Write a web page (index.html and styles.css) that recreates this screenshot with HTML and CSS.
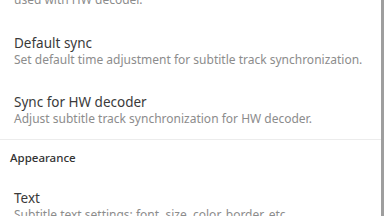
FILE: index.html
```html
<!DOCTYPE html>
<html>
<head>
    <title>Subtitle settings</title>
    <link rel="stylesheet" href="styles.css">
</head>
<body>
    <div class="screen">
        <div class="list">
            <div class="item cut">
                <div class="summary">used with HW decoder.</div>
            </div>
            <div class="item">
                <div class="title">Default sync</div>
                <div class="summary">Set default time adjustment for subtitle track synchronization.</div>
            </div>
            <div class="item">
                <div class="title">Sync for HW decoder</div>
                <div class="summary">Adjust subtitle track synchronization for HW decoder.</div>
            </div>
            <div class="divider"></div>
            <div class="category">Appearance</div>
            <div class="item">
                <div class="title">Text</div>
                <div class="summary">Subtitle text settings: font, size, color, border, etc.</div>
            </div>
        </div>
        <div class="scrollbar"></div>
    </div>
</body>
</html>
```

FILE: styles.css
```css
body {
    margin: 0;
    font-family: "Noto Sans", sans-serif;
    background-color: #fff;
}

.screen {
    display: flex;
    width: 384px;
    height: 216px;
    overflow: hidden;
}

.list {
    flex: 1;
}

.item {
    padding: 14px 14px 12px;
}

.item.cut {
    margin-top: -8px;
    padding-top: 0;
    padding-bottom: 13px;
}

.title {
    font-size: 13.5px;
    line-height: 17px;
    color: #3a3a3a;
}

.summary {
    font-size: 12px;
    line-height: 16px;
    color: #8c8c8c;
}

.divider {
    height: 1px;
    background-color: #ececec;
}

.category {
    padding: 10px 10px 11px;
    font-size: 11.5px;
    line-height: 15px;
    font-weight: 500;
    color: #333;
}

.scrollbar {
    width: 3px;
    background-color: #9e9e9e;
}
```
